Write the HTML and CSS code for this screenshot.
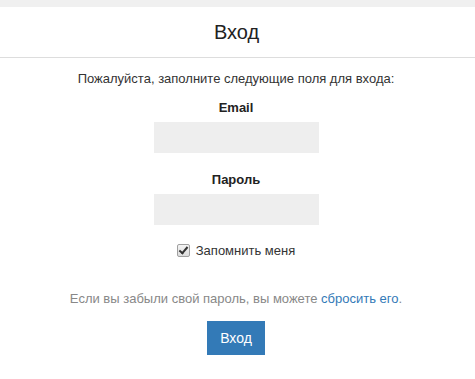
FILE: index.html
```html
<!DOCTYPE html>
<html lang="ru">
<head>
    <meta charset="UTF-8">
    <meta name="viewport" content="width=device-width, initial-scale=1.0">
    <title>Вход</title>
    <link rel="stylesheet" href="styles.css">
</head>
<body>
    <div class="topbar"></div>
    <div class="header">
        <h1>Вход</h1>
    </div>

    <form class="login-form">
        <p class="intro">Пожалуйста, заполните следующие поля для входа:</p>

        <div class="field">
            <label for="email">Email</label>
            <input type="text" id="email">
        </div>

        <div class="field">
            <label for="password">Пароль</label>
            <input type="password" id="password">
        </div>

        <div class="remember">
            <input type="checkbox" id="remember" checked>
            <label for="remember">Запомнить меня</label>
        </div>

        <p class="hint">Если вы забыли свой пароль, вы можете <a href="#">сбросить его</a>.</p>

        <button type="submit">Вход</button>
    </form>
</body>
</html>
```

FILE: styles.css
```css
body {
    margin: 0;
    font-family: Arial, "Liberation Sans", sans-serif;
    font-size: 13px;
    color: #333;
    background: #fff;
}
.topbar {
    height: 7px;
    background-color: #f0f0f0;
}
.header {
    height: 50px;
    padding-right: 2px;
    border-bottom: 1px solid #ddd;
    display: flex;
    align-items: center;
    justify-content: center;
}
.header h1 {
    margin: 0;
    font-size: 20px;
    font-weight: normal;
    color: #222;
}
.login-form {
    display: flex;
    flex-direction: column;
    align-items: center;
    padding-right: 3px;
}
.intro {
    margin: 13px 0 0;
    line-height: 15px;
}
.field {
    display: flex;
    flex-direction: column;
    align-items: center;
}
.field label {
    font-weight: bold;
    line-height: 15px;
    margin-top: 14px;
    margin-bottom: 7px;
    color: #222;
}
.field input {
    width: 165px;
    height: 31px;
    box-sizing: border-box;
    border: none;
    background-color: #eee;
}
.field + .field label {
    margin-top: 19px;
}
.remember {
    display: flex;
    align-items: center;
    margin-top: 18px;
}
.remember input {
    appearance: none;
    -webkit-appearance: none;
    position: relative;
    box-sizing: border-box;
    margin: 0 6px 0 0;
    width: 13px;
    height: 13px;
    border: 1px solid #a0a0a0;
    border-radius: 2px;
    background: linear-gradient(#f4f4f4, #dcdcdc);
}
.remember input:checked::after {
    content: "";
    position: absolute;
    left: 3px;
    top: 0px;
    width: 3px;
    height: 7px;
    border: solid #333;
    border-width: 0 2px 2px 0;
    transform: rotate(40deg);
}
.remember label {
    line-height: 15px;
}
.hint {
    margin: 33px 0 0;
    color: #888;
    line-height: 15px;
}
.hint a {
    color: #337ab7;
    text-decoration: none;
}
button {
    margin-top: 15px;
    width: 58px;
    height: 34px;
    border: none;
    background-color: #337ab7;
    color: #fff;
    font-family: inherit;
    font-size: 14px;
    cursor: pointer;
}
```
